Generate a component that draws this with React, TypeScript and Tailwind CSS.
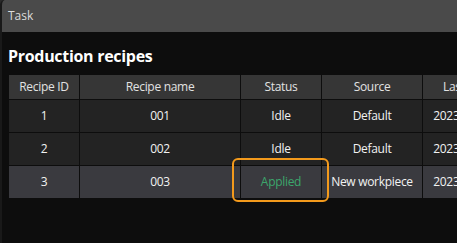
import React from 'react';

interface Recipe {
  id: number;
  name: string;
  status: 'Idle' | 'Applied';
  source: string;
  modified: string;
}

const recipes: Recipe[] = [
  { id: 1, name: '001', status: 'Idle', source: 'Default', modified: '2023-06-12 09:41' },
  { id: 2, name: '002', status: 'Idle', source: 'Default', modified: '2023-06-12 09:43' },
  { id: 3, name: '003', status: 'Applied', source: 'New workpiece', modified: '2023-06-14 15:20' },
];

const cols = 'grid grid-cols-[70px_160px_80px_100px_112px] gap-x-px';

export default function App() {
  return (
    <div className="w-[457px] h-[243px] overflow-hidden bg-[#2a2a2a] font-['Open_Sans','Noto_Sans',sans-serif]">
      <div className="h-full flex flex-col rounded-tl-[5px] overflow-hidden bg-[#0d0d0d] border-l-2 border-[#191919]">
        <div className="h-8 shrink-0 bg-[#4a4a4a] flex items-center px-[6px] text-[12px] text-[#dcdcdc]">
          Task
        </div>

        <div className="px-[6px] pt-[14px]">
          <h2 className="text-[16px] leading-[20px] font-bold text-white tracking-[-0.3px]">Production recipes</h2>

          <div className="mt-[9px] ml-px w-max flex flex-col gap-y-px text-[12px] tracking-[-0.3px]">
            <div className={`${cols} h-6`}>
              {['Recipe ID', 'Recipe name', 'Status', 'Source', 'Last modified'].map(h => (
                <div key={h} className="bg-[#363636] text-[#e2e2e2] flex items-center justify-center whitespace-nowrap">
                  {h}
                </div>
              ))}
            </div>

            {recipes.map(r => {
              const rowBg = r.status === 'Applied' ? 'bg-[#3a3a3f]' : 'bg-[#232323]';
              return (
                <div key={r.id} className={`${cols} h-8 text-[#f2f2f2]`}>
                  <div className={`${rowBg} flex items-center justify-center`}>{r.id}</div>
                  <div className={`${rowBg} flex items-center justify-center`}>{r.name}</div>
                  <div className={`${rowBg} relative flex items-center justify-center`}>
                    {r.status === 'Applied' ? (
                      <>
                        <span className="text-[#3ca66c]">Applied</span>
                        <div className="absolute -left-[9px] -right-[8px] -top-[8px] -bottom-[4px] border-2 border-[#f39a1c] rounded-[6px]" />
                      </>
                    ) : (
                      r.status
                    )}
                  </div>
                  <div className={`${rowBg} flex items-center justify-center whitespace-nowrap`}>{r.source}</div>
                  <div className={`${rowBg} flex items-center justify-center whitespace-nowrap`}>{r.modified}</div>
                </div>
              );
            })}
          </div>
        </div>
      </div>
    </div>
  );
}
